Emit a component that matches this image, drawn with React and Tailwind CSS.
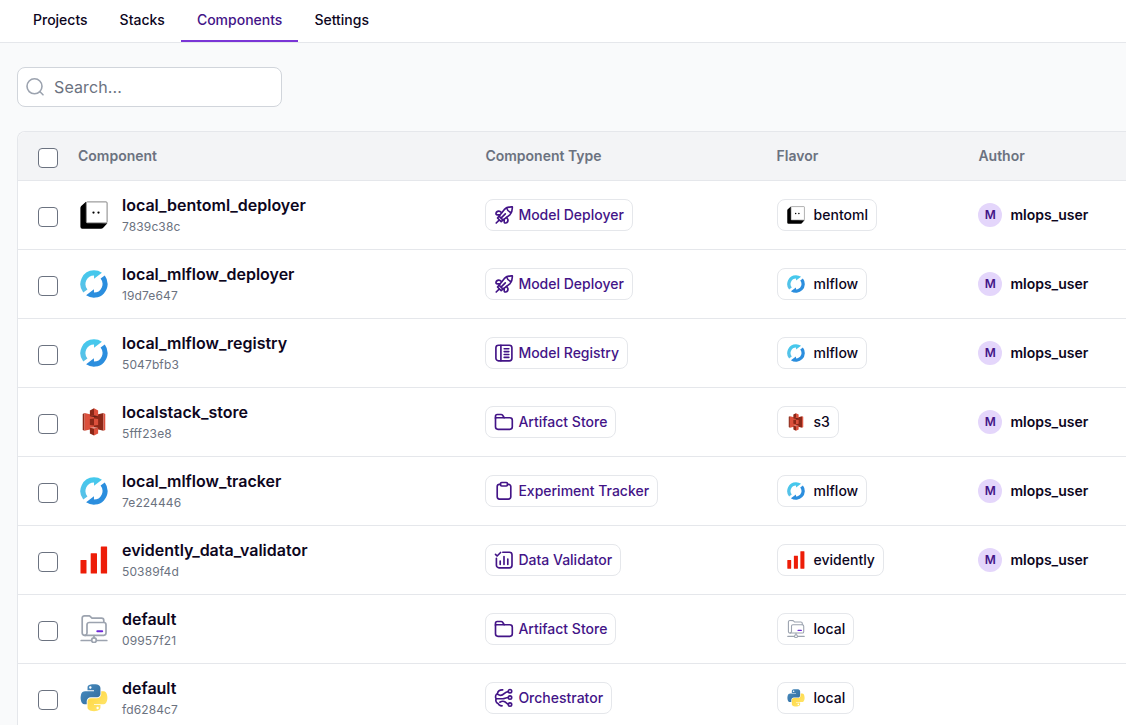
import React from "react";

function MlflowIcon({ className }) {
  return (
    <svg viewBox="-0.300 -0.300 24.600 24.600" className={className}>
      <defs>
        <linearGradient id="mlLight" x1="0" y1="0" x2="0" y2="1">
          <stop offset="0" stopColor="#43c9ed" />
          <stop offset="1" stopColor="#5bbfe6" />
        </linearGradient>
      </defs>
      <path fill="url(#mlLight)" d="M11.883.002a12.044 12.044 0 0 0-9.326 19.463l3.668-2.694A7.573 7.573 0 0 1 12.043 4.45v2.867l6.908-5.14A12.012 12.012 0 0 0 11.883.002z" />
      <path fill="#2b8ede" d="M21.445 4.535L17.777 7.23a7.573 7.573 0 0 1-5.818 12.322v-2.867l-6.908 5.14a12.046 12.046 0 0 0 16.394-17.29z" />
    </svg>
  );
}

function BentoIcon({ className }) {
  return (
    <svg viewBox="0 0 28 28" className={className}>
      <path d="M6 .8 1.2 5Q.4 5.8.4 7v18.8q0 1.9 1.9 1.9H21q1.200 0 2-.8l4.400-4.700L6.500 21.500Z" fill="#000" />
      <rect x="6.300" y="0.900" width="20.800" height="21" rx="1" fill="#fff" stroke="#777" strokeWidth="0.900" />
      <circle cx="13.500" cy="11.600" r="1.150" />
      <circle cx="18.500" cy="11.600" r="1.150" />
    </svg>
  );
}

function S3Icon({ className }) {
  return (
    <svg viewBox="0 -4 256 318" className={className}>
      <path fill="#8C2818" d="M20.624 53.686L0 64v181.02l20.624 10.254.124-.149V53.828l-.124-.142" />
      <path fill="#DC4F3B" d="M131 229L20.624 255.274V53.686L131 79.387V229" />
      <path fill="#8C2818" d="M81.178 187.866l46.818 5.96.294-.678.263-76.77-.557-.6-46.818 5.874v66.214" />
      <path fill="#8C2818" d="M127.996 229.295l107.371 26.035.169-.269-.003-201.195-.17-.18-107.367 25.996v149.613" />
      <path fill="#DC4F3B" d="M174.827 187.866l-46.831 5.96v-78.048l46.831 5.874v66.214" />
      <path fill="#5E1F18" d="M174.827 89.631l-46.831 8.535-46.818-8.535 46.759-12.256 46.89 12.256" />
      <path fill="#E8A096" d="M174.827 219.801l-46.831-8.591-46.818 8.591 46.761 13.053 46.888-13.053" />
      <path fill="#8C2818" d="M81.178 89.631l46.818-11.586.379-.117V.313L127.996 0 81.178 23.413v66.218" />
      <path fill="#DC4F3B" d="M174.827 89.631l-46.831-11.586V0l46.831 23.413v66.218" />
      <path fill="#8C2818" d="M127.996 309.428l-46.823-23.405v-66.217l46.823 11.582.689.783-.187 75.906-.502 1.351" />
      <path fill="#DC4F3B" d="M127.996 309.428l46.827-23.405v-66.217l-46.827 11.582v78.04" />
      <path fill="#DC4F3B" d="M235.367 255.33l20.627-10.31V64l-20.627-10.314V255.33" />
    </svg>
  );
}

function EvidentlyIcon({ className }) {
  return (
    <svg viewBox="0 0 28 28" className={className} fill="#ed1d08">
      <rect x="0.500" y="14" width="6" height="13.500" rx="0.500" />
      <rect x="10.700" y="7.200" width="6.300" height="20.300" rx="0.500" />
      <rect x="20.800" y="0.500" width="6.300" height="27" rx="0.500" />
    </svg>
  );
}

function LocalStoreIcon({ className }) {
  return (
    <svg viewBox="0 0 28 28" className={className} fill="none" stroke="#9ca3af" strokeWidth="1.700" strokeLinecap="round" strokeLinejoin="round">
      <path d="M5.500 20.300H4.500a2.300 2.300 0 0 1-2.300-2.300V2.900A2.300 2.300 0 0 1 4.500.9h5l2.500 2.300h9.500a2.300 2.300 0 0 1 2.300 2.300v1.700" />
      <path d="M5 20.300c1.500-.3 2-1.300 2-2.300V9.700a2.200 2.200 0 0 1 2.200-2.200h14.600A2.200 2.200 0 0 1 26 9.700v8.400a2.200 2.200 0 0 1-2.200 2.200H5" />
      <path d="M14 20.500v2.300M1.200 25.500h9.800M17 25.500h9.800" />
      <circle cx="14" cy="25.200" r="2.300" />
      <path d="M17.300 16.300h4.900" stroke="#6d28d9" strokeWidth="2" />
    </svg>
  );
}

function PythonIcon({ className }) {
  return (
    <svg viewBox="12 1 104 107" className={className}>
      <defs>
        <linearGradient id="pyBlue" x1="0" y1="0" x2="1" y2="1">
          <stop offset="0" stopColor="#4a8fc4" />
          <stop offset="1" stopColor="#306998" />
        </linearGradient>
        <linearGradient id="pyYellow" x1="1" y1="1" x2="0" y2="0">
          <stop offset="0" stopColor="#ffe873" />
          <stop offset="1" stopColor="#ffd43b" />
        </linearGradient>
      </defs>
      <path fill="url(#pyBlue)" d="M63.391 1.988c-4.222.02-8.252.379-11.8 1.007-10.45 1.846-12.346 5.71-12.346 12.837v9.411h24.693v3.137H29.977c-7.176 0-13.46 4.313-15.426 12.521-2.268 9.405-2.368 15.275 0 25.096 1.755 7.311 5.947 12.519 13.124 12.519h8.491V67.234c0-8.151 7.051-15.34 15.426-15.34h24.665c6.866 0 12.346-5.654 12.346-12.548V15.833c0-6.693-5.646-11.72-12.346-12.837-4.244-.706-8.645-1.027-12.866-1.008zM50.037 9.557c2.55 0 4.634 2.117 4.634 4.721 0 2.593-2.083 4.69-4.634 4.69-2.56 0-4.633-2.097-4.633-4.69-.001-2.604 2.073-4.721 4.633-4.721z" />
      <path fill="url(#pyYellow)" d="M91.682 28.38v10.966c0 8.5-7.208 15.655-15.426 15.655H51.591c-6.756 0-12.346 5.783-12.346 12.549v23.515c0 6.691 5.818 10.628 12.346 12.547 7.816 2.297 16.221 2.713 24.665 0 6.216-1.801 12.346-5.423 12.346-12.547v-9.412H63.938v-3.138h37.012c7.176 0 9.852-5.005 12.348-12.519 2.578-7.735 2.467-15.174 0-25.096-1.774-7.145-5.161-12.521-12.348-12.521h-9.268zM77.809 87.927c2.561 0 4.634 2.097 4.634 4.692 0 2.602-2.074 4.719-4.634 4.719-2.55 0-4.633-2.117-4.633-4.719 0-2.595 2.083-4.692 4.633-4.692z" />
    </svg>
  );
}

function TypeSvg({ children }) {
  return (
    <svg viewBox="0 0 20 20" className="size-5 shrink-0" fill="none" stroke="currentColor" strokeWidth="1.650" strokeLinecap="round" strokeLinejoin="round">
      {children}
    </svg>
  );
}

const typeIcons = {
  "Model Deployer": (
    <TypeSvg>
      <path d="M5 11.200 10.400 4.400C12.400 2.400 15 1.700 18.300 1.900c.2 3.300-.5 5.900-2.500 7.900L9 15.200Z" />
      <path d="M12.600 2.900c.6 2.300 2.200 4 4.600 4.600" />
      <path d="M7.700 7.600 5.600 6.200c-1.600-.3-3.200.5-3.600 2.100-.2 1 .4 1.500 1.300 1.500h2.600M12.400 12.300l1.500 2.100c.3 1.600-.5 3.200-2.100 3.600-1 .2-1.600-.4-1.600-1.300v-2.600" />
      <path d="M11.300 8.900 7.500 12.700M5 11.200l-1.500 1.800 3.700 3.700L9 15.200M5.400 14.800l-3.200 3.200" />
    </TypeSvg>
  ),
  "Model Registry": (
    <TypeSvg>
      <rect x="1.900" y="2.200" width="16" height="15.600" rx="2.600" />
      <path d="M6.900 2.200v15.600M10.200 5.700h4.600M10.200 8.600h4.600M10.200 11.500h4.600M10.200 14.400h4.600" />
    </TypeSvg>
  ),
  "Artifact Store": (
    <TypeSvg>
      <path d="M1.500 6.300V4.200A1.700 1.700 0 0 1 3.200 2.500h3.900c.6 0 1 .2 1.300.6L10.300 5.700" />
      <path d="M1.500 5.700h14.300a2.500 2.500 0 0 1 2.500 2.500v6.600a2.500 2.500 0 0 1-2.500 2.500H4a2.500 2.500 0 0 1-2.500-2.500Z" />
    </TypeSvg>
  ),
  "Experiment Tracker": (
    <TypeSvg>
      <path d="M6.500 3.300h-1A2.300 2.300 0 0 0 3.200 5.600v10.200a2.300 2.300 0 0 0 2.300 2.300h9a2.300 2.300 0 0 0 2.300-2.300V5.600a2.300 2.300 0 0 0-2.300-2.300h-1" />
      <rect x="6.500" y="1.500" width="7" height="3.500" rx="1.200" />
    </TypeSvg>
  ),
  "Data Validator": (
    <TypeSvg>
      <path d="M8.800 2.200h6.600A2.600 2.600 0 0 1 18 4.800v10.400a2.600 2.600 0 0 1-2.600 2.600H5a2.600 2.600 0 0 1-2.600-2.600V8.300" />
      <path d="m1.500 4.400 1.600 1.600 3.500-3.500M6.200 11v3.500M10 6.500v8M13.800 9v5.500" />
    </TypeSvg>
  ),
  Orchestrator: (
    <TypeSvg>
      <path d="M8.700 1.900C5.700 1.700 3.600 3.200 3.500 5.400 1.500 6.600 1 9 2.100 10.600c-.8 2.400.2 4.300 2 4.900.6 1.500 2 2.400 4 2.300" />
      <path d="M3.700 6.400c2.500 1.600 4.800.9 6.400-.7 1.300-1.300 2.700-2 4.200-2.100M2.300 10.700h6.500c1.900 0 2.800-1.200 5.500-1.200M5.800 14.200c1.700-1 4-1.200 5.400-.2 1.300.9 1.700 1.800 3.200 2.100" />
      <circle cx="16" cy="3.200" r="1.700" />
      <circle cx="16" cy="9.500" r="1.700" />
      <circle cx="16" cy="16.500" r="1.700" />
    </TypeSvg>
  ),
};

const rows = [
  { name: "local_bentoml_deployer", id: "7839c38c", type: "Model Deployer", flavor: "bentoml", Icon: BentoIcon, author: "mlops_user" },
  { name: "local_mlflow_deployer", id: "19d7e647", type: "Model Deployer", flavor: "mlflow", Icon: MlflowIcon, author: "mlops_user" },
  { name: "local_mlflow_registry", id: "5047bfb3", type: "Model Registry", flavor: "mlflow", Icon: MlflowIcon, author: "mlops_user" },
  { name: "localstack_store", id: "5fff23e8", type: "Artifact Store", flavor: "s3", Icon: S3Icon, author: "mlops_user" },
  { name: "local_mlflow_tracker", id: "7e224446", type: "Experiment Tracker", flavor: "mlflow", Icon: MlflowIcon, author: "mlops_user" },
  { name: "evidently_data_validator", id: "50389f4d", type: "Data Validator", flavor: "evidently", Icon: EvidentlyIcon, author: "mlops_user" },
  { name: "default", id: "09957f21", type: "Artifact Store", flavor: "local", Icon: LocalStoreIcon },
  { name: "default", id: "fd6284c7", type: "Orchestrator", flavor: "local", Icon: PythonIcon },
];

const grid = "grid grid-cols-[60px_407.400px_291.200px_201.800px_1fr] items-center border-b border-[#e5e7eb]";

function Checkbox() {
  return <input type="checkbox" className="mt-1 ml-5 block size-5 appearance-none rounded-[4px] border border-[#6b7280] bg-white" />;
}

function Tab({ label, active }) {
  return (
    <a
      className={
        active
          ? "flex h-[42px] items-center border-b-2 border-[#7a35d6] px-4 text-[#431487]"
          : "flex h-[42px] items-center border-b-2 border-transparent px-4 text-[#0d061d]"
      }
    >
      {label}
    </a>
  );
}

export default function App() {
  return (
    <div className="h-[725px] overflow-hidden bg-[#f9fafb] font-['Inter',sans-serif] text-sm text-[#0d061d]">
      <nav className="flex h-[43px] border-b border-[#e5e7eb] bg-white pl-[17px] font-medium">
        <Tab label="Projects" />
        <Tab label="Stacks" />
        <Tab label="Components" active />
        <Tab label="Settings" />
      </nav>
      <main className="pt-6 pl-[17px]">
        <label className="flex h-10 w-[265px] items-center gap-[9px] rounded-lg border border-[#d1d5db] bg-white pl-[7px]">
          <svg viewBox="0 0 20 20" className="size-5" fill="none" stroke="#9ca3af" strokeWidth="1.600" strokeLinecap="round">
            <circle cx="9.500" cy="9.300" r="7.500" />
            <path d="m15 14.800 3 3" />
          </svg>
          <input placeholder="Search..." className="w-52 bg-transparent text-base tracking-[0.12px] outline-none placeholder:text-[#6b7280]" />
        </label>
        <div className="mt-6 rounded-tl-lg border-t border-l border-[#e5e7eb] bg-white">
          <div className={`${grid} h-[49px] rounded-tl-lg bg-[#f3f4f6] font-semibold text-[#6b7280]`}>
            <Checkbox />
            <span>Component</span>
            <span>Component Type</span>
            <span>Flavor</span>
            <span>Author</span>
          </div>
          {rows.map(({ name, id, type, flavor, Icon, author }) => (
            <div key={id} className={`${grid} h-[69px]`}>
              <Checkbox />
              <div className="flex items-center gap-3.5 pl-0.5">
                <Icon className="size-7 shrink-0" />
                <div>
                  <div className="text-base/6 font-semibold">{name}</div>
                  <div className="text-xs/5 tracking-[0.12px] text-[#6b7280]">{id}</div>
                </div>
              </div>
              <div className="flex">
                <span className="flex h-8 items-center gap-1 rounded-lg border border-[#e5e7eb] px-2 font-medium text-[#431487]">
                  {typeIcons[type]}
                  {type}
                </span>
              </div>
              <div className="flex">
                <span className="flex h-8 items-center gap-2 rounded-lg border border-[#e5e7eb] px-2 font-medium">
                  <Icon className="mx-px size-[18px] shrink-0" />
                  {flavor}
                </span>
              </div>
              {author ? (
                <div className="flex items-center gap-2 font-semibold">
                  <span className="flex size-6 items-center justify-center rounded-full bg-[#e4d6fb] text-xs text-[#431487]">M</span>
                  {author}
                </div>
              ) : (
                <span />
              )}
            </div>
          ))}
        </div>
      </main>
    </div>
  );
}
